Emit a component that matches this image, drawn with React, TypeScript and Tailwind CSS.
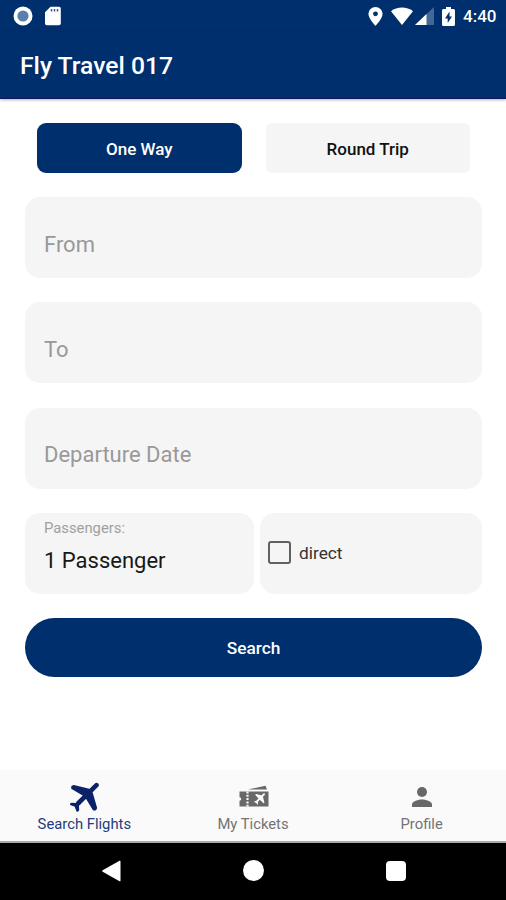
import type { ReactNode } from "react";

const StatusBar = () => {
    return (
        <div className="flex h-8 items-center justify-between bg-[#002f6e] pl-[13px] pr-[9px] text-white">
            <div className="flex items-center gap-3 pb-px">
                <svg className="h-5 w-5" viewBox="0 0 20 20">
                    <circle cx="10" cy="10" r="9.5" fill="#fff" />
                    <circle cx="10" cy="10" r="5.6" fill="#5b7fac" />
                </svg>
                <svg className="h-5 w-4" viewBox="0 0 16 20">
                    <path fill="#fff" d="M5.500.8H14a1.800 1.800 0 0 1 1.800 1.800v14.800a1.800 1.800 0 0 1-1.800 1.800H1.800A1.800 1.800 0 0 1 0 17.400V6.300z" />
                    <path stroke="#315a90" strokeWidth="1.5" d="M6.500 3v2.500M9.500 3v2.500M12.500 3v2.500" />
                </svg>
            </div>
            <div className="flex items-center">
                <svg className="mr-2 h-[19px] w-[15px]" viewBox="0 0 14 18">
                    <path fill="#fff" fillRule="evenodd" d="M7 0a6.700 6.500 0 0 0-6.700 6.500C.3 11.200 7 18 7 18s6.700-6.800 6.700-11.500A6.700 6.500 0 0 0 7 0zm0 4.200a2.300 2.300 0 1 1 0 4.600 2.300 2.300 0 0 1 0-4.600z" />
                </svg>
                <svg className="mr-0.5 h-[18px] w-[22px]" viewBox="0 0 22 18">
                    <path fill="#fff" d="M11 18 0 4.200C6-.8 16-.8 22 4.200z" />
                </svg>
                <svg className="mr-2 h-[18px] w-[19px]" viewBox="0 0 19 18">
                    <path fill="#416899" d="M0 18 19 0v18z" />
                    <path fill="#fff" d="M0 18 11.500 7.100V18z" />
                </svg>
                <svg className="mr-2 h-[19px] w-[13px]" viewBox="0 0 13 19">
                    <path fill="#fff" d="M4 0h5v2h2.500A1.500 1.500 0 0 1 13 3.500v14a1.500 1.500 0 0 1-1.500 1.500h-10A1.500 1.500 0 0 1 0 17.500v-14A1.500 1.500 0 0 1 1.500 2H4z" />
                    <path fill="#002f6e" d="M7.500 4.500 3 11.500h2.700V16L10 9.500H7.500z" />
                </svg>
                <span className="w-[34px] text-[17px] leading-5 font-medium">4:40</span>
            </div>
        </div>
    );
};

const Field = ({ label }: { label: string }) => {
    return (
        <div className="h-[81px] rounded-[15px] bg-[#f5f5f5] pt-[31.5px] pl-[19px] text-[22px] leading-8 text-[#999]">
            {label}
        </div>
    );
};

const PlaneIcon = () => {
    return (
        <svg className="ml-0.5 h-[30px] w-[30px]" viewBox="0 0 30 30" fill="#0b2268" stroke="#0b2268" strokeLinecap="round" strokeLinejoin="round">
            <path strokeWidth="4.6" d="M26.500 3.200 8.500 21" />
            <path strokeWidth="1.600" d="M2 4.600 3.700 3.700 19 7.500l-5.500 5.500L2 6.300zM25.500 27.700l.8-1.700L22 11l-5.500 5 7 11.700z" />
            <path strokeWidth="1.600" d="m1.500 21.500 5 .2L9.500 19.500l1 1-2.300 3 .2 4.700-1.200.8-2-5-4.700-1.700z" />
        </svg>
    );
};

const TicketIcon = () => {
    return (
        <svg className="mb-[3px] ml-px h-6 w-[30px]" viewBox="0 0 30 24">
            <path fill="#686868" d="M9 4.600 26.500.8 28 4.600z" />
            <path fill="#686868" d="M.5 6.500h29v15H.5v-5.800a1.700 1.700 0 0 0 0-3.400z" />
            <path stroke="#fafafa" strokeWidth="2.200" strokeDasharray="2 1.300" d="M8.500 6.500v15" />
            <g stroke="#fafafa" strokeLinecap="round" strokeLinejoin="round">
                <path strokeWidth="2" d="m25 9.200-7.500 7.700" />
                <path strokeWidth="1.300" fill="#fafafa" d="m17 9.700 6.200 1.500-2.500 2.500zM24.700 17.500l-1.500-6.200-2.500 2.500zM16 16.700l2 .3.500 1.800" />
            </g>
        </svg>
    );
};

const ProfileIcon = () => {
    return (
        <svg className="mb-[5px] ml-px h-5 w-5" viewBox="0 0 20 20" fill="#686868">
            <circle cx="10" cy="5" r="5" />
            <path d="M0 20v-2.500c0-3.300 6.700-5 10-5s10 1.700 10 5V20z" />
        </svg>
    );
};

const Tab = ({ label, active, icon }: { label: string; active?: boolean; icon: ReactNode }) => {
    return (
        <div className="flex flex-1 flex-col items-center">
            <div className="flex h-[42px] items-end justify-center">{icon}</div>
            <p className={active ? "text-[14.8px] leading-6 text-[#233c7b]" : "text-[14.8px] leading-6 text-[#737373]"}>
                {label}
            </p>
        </div>
    );
};

const App = () => {
    return (
        <div className="flex h-[900px] w-[506px] flex-col overflow-hidden bg-white font-['Roboto',sans-serif]">
            <StatusBar />
            <div className="flex h-[67px] items-center border-b border-[#15155f] bg-[#002f6e] pt-px pl-5 shadow-[0_1px_3px_rgba(0,0,0,0.3)]">
                <h1 className="text-[24.7px] leading-8 font-medium text-white">Fly Travel 017</h1>
            </div>

            <div className="flex flex-1 flex-col pt-6 pr-6 pl-[25px]">
                <div className="mb-6 flex h-[50px] gap-6 px-3 text-[17px] font-medium">
                    <div className="flex flex-1 items-center justify-center rounded-[9px] bg-[#002f6e] pt-[3px] text-white">
                        One Way
                    </div>
                    <div className="flex flex-1 items-center justify-center rounded-md bg-[#f5f5f5] pt-[3px] text-[#111]">
                        Round Trip
                    </div>
                </div>
                <div className="flex flex-col gap-[24.3px]">
                    <Field label="From" />
                    <Field label="To" />
                    <Field label="Departure Date" />
                    <div className="flex h-[81px] gap-1.5">
                        <div className="w-[229px] rounded-[15px] bg-[#f5f5f5] pt-[5px] pl-[19px]">
                            <p className="text-[14.8px] leading-5 text-[#a0a0a0]">Passengers:</p>
                            <p className="mt-[7px] text-[22px] leading-8 text-[#181818]">1 Passenger</p>
                        </div>
                        <div className="flex flex-1 items-center gap-2 rounded-[15px] bg-[#f5f5f5] pb-0.5 pl-2">
                            <div className="h-[23px] w-[23px] rounded-[3px] border-2 border-[#606060]" />
                            <span className="pt-0.5 text-[17.3px] leading-6 text-[#333]">direct</span>
                        </div>
                    </div>
                    <div className="flex h-[59px] items-center justify-center rounded-full bg-[#002f6e] pt-0.5 text-[17.3px] font-medium text-white">
                        Search
                    </div>
                </div>
            </div>

            <div className="flex h-[73px] border-b-2 border-[#aaa] bg-[#fafafa]">
                <Tab label="Search Flights" active icon={<PlaneIcon />} />
                <Tab label="My Tickets" icon={<TicketIcon />} />
                <Tab label="Profile" icon={<ProfileIcon />} />
            </div>
            <div className="flex h-[57px] items-center bg-black">
                <div className="flex w-full justify-between pb-0.5 pr-[100px] pl-[102px]">
                    <svg className="h-[22px] w-[19px]" viewBox="0 0 19 22">
                        <path fill="#fff" d="M17.500.8q1-.5 1 .7v19q0 1.200-1 .7L.7 11.700q-1-.7 0-1.400z" />
                    </svg>
                    <div className="h-[21px] w-[21px] rounded-full bg-white" />
                    <div className="mt-px h-5 w-5 rounded-sm bg-white" />
                </div>
            </div>
        </div>
    );
};

export default App;
